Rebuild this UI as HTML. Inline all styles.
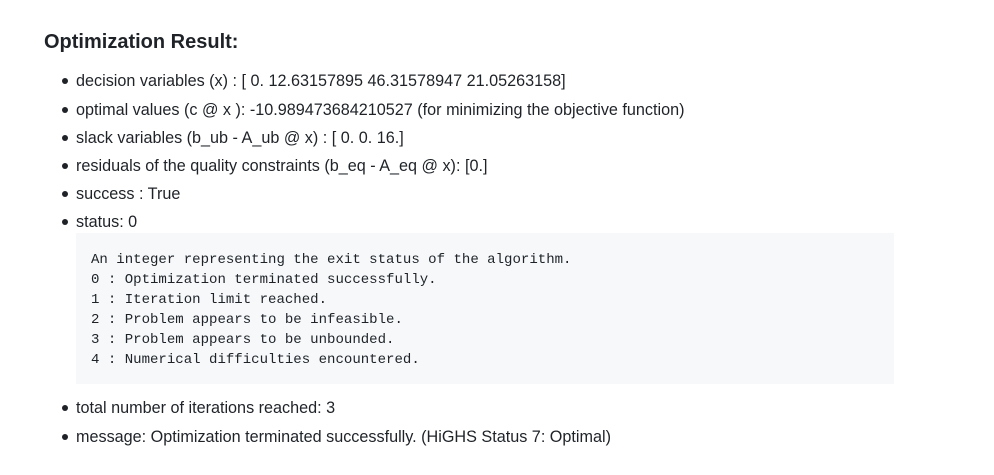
<!DOCTYPE html>
<html><head><style>
body{margin:0;background:#fff;font-family:"Liberation Sans",sans-serif;color:#1f2328;width:994px;height:475px;overflow:hidden}
h3{position:absolute;left:44px;top:30px;margin:0;font-size:20px;font-weight:bold;line-height:24px}
.li{position:absolute;left:76px;font-size:16.2px;line-height:24px;white-space:nowrap}
.li:before{content:"";position:absolute;left:-14px;top:9px;width:6px;height:6px;border-radius:50%;background:#1f2328}
pre{position:absolute;left:76px;top:233px;width:818px;height:151px;margin:0;background:#f6f8fa;box-sizing:border-box;padding:17px 15px;font-family:"Liberation Mono",monospace;font-size:14.05px;line-height:20px;color:#1f2328}
</style></head><body>
<h3>Optimization Result:</h3>
<div class="li" style="top:69px">decision variables (x) : [ 0. 12.63157895 46.31578947 21.05263158]</div>
<div class="li" style="top:98px">optimal values (c @ x ): -10.989473684210527 (for minimizing the objective function)</div>
<div class="li" style="top:126px">slack variables (b_ub - A_ub @ x) : [ 0. 0. 16.]</div>
<div class="li" style="top:154px">residuals of the quality constraints (b_eq - A_eq @ x): [0.]</div>
<div class="li" style="top:182px">success : True</div>
<div class="li" style="top:210px">status: 0</div>
<pre>An integer representing the exit status of the algorithm.
0 : Optimization terminated successfully.
1 : Iteration limit reached.
2 : Problem appears to be infeasible.
3 : Problem appears to be unbounded.
4 : Numerical difficulties encountered.</pre>
<div class="li" style="top:396px">total number of iterations reached: 3</div>
<div class="li" style="top:425px">message: Optimization terminated successfully. (HiGHS Status 7: Optimal)</div>
</body></html>
